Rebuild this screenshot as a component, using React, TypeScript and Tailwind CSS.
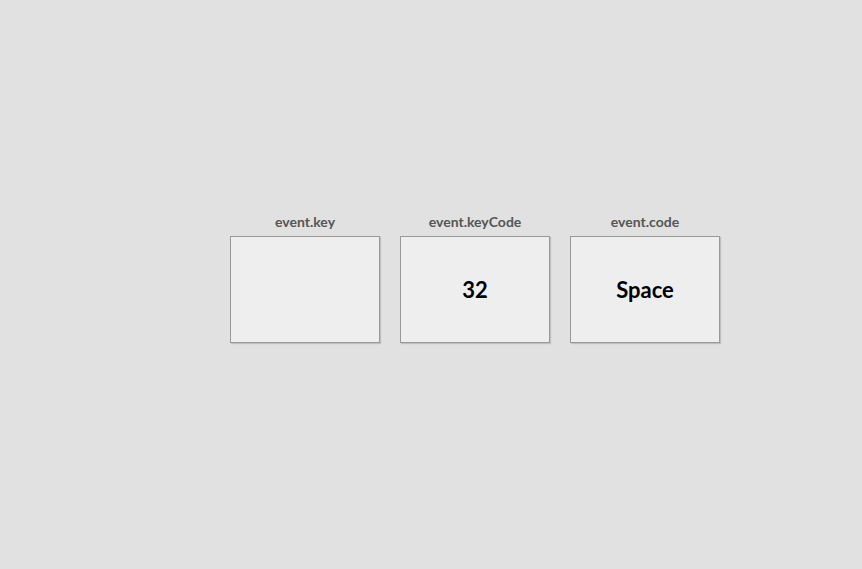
import React from 'react';

const cards = [
  { label: 'event.key', value: '' },
  { label: 'event.keyCode', value: '32' },
  { label: 'event.code', value: 'Space' },
];

export default function App() {
  return (
    <div
      className="h-[569px] w-full bg-[#e1e1e1] pl-[230px] pt-[213px]"
      style={{ fontFamily: 'Lato, "Open Sans", sans-serif' }}
    >
      <div className="flex gap-5">
        {cards.map((c) => (
          <div key={c.label} className="flex w-[150px] flex-col items-center">
            <div className="h-[18px] text-[14px] font-bold leading-[18px] text-[#555]">{c.label}</div>
            <div className="mt-[5px] flex h-[107px] w-[150px] items-center justify-center border border-[#999] bg-[#eeeeee] text-[22px] font-bold text-black shadow-[1px_1px_1px_rgba(0,0,0,0.15)]">
              {c.value}
            </div>
          </div>
        ))}
      </div>
    </div>
  );
}
